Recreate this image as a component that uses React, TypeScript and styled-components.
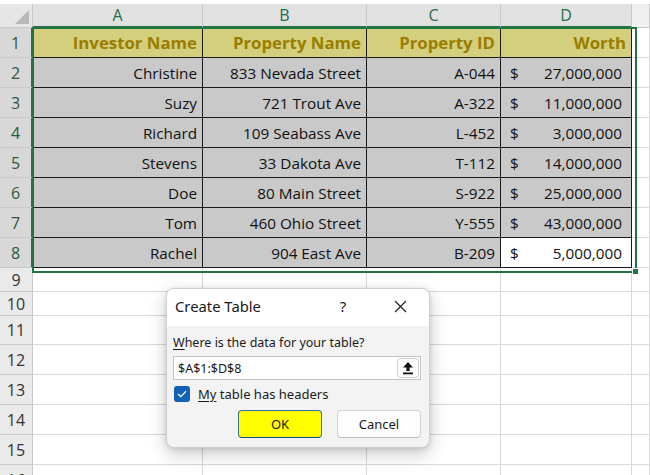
import React from "react";
import styled, { createGlobalStyle } from "styled-components";

const Global = createGlobalStyle`
  html, body { margin: 0; padding: 0; background: #ffffff; }
  body { width: 650px; height: 475px; overflow: hidden; }
`;

const GREEN = "#217346";

const Page = styled.div`
  position: relative;
  width: 650px;
  height: 475px;
  overflow: hidden;
  background: #ffffff;
  padding-top: 4px;
  box-sizing: border-box;
  font-family: "Open Sans", "Noto Sans", sans-serif;
`;

const Sheet = styled.div`
  position: relative;
  display: grid;
  grid-template-columns: 33px 170px 164px 134px 131px 1fr;
  grid-template-rows: 24px repeat(8, 30px) 24px 24px 29px repeat(6, 30px);
`;

const Corner = styled.div`
  position: relative;
  background: #e6e6e6;
  border-right: 1px solid #c8c8c8;
  border-bottom: 1px solid #c8c8c8;
  &::after {
    content: "";
    position: absolute;
    right: 3px;
    bottom: 3px;
    width: 0;
    height: 0;
    border-left: 14px solid transparent;
    border-bottom: 14px solid #b8b8b8;
  }
`;

const ColHead = styled.div<{ $sel?: boolean }>`
  display: flex;
  align-items: center;
  justify-content: center;
  font-size: 16px;
  background: ${(p) => (p.$sel ? "#e1e1e1" : "#f0f0f0")};
  color: ${(p) => (p.$sel ? "#1f6f47" : "#444")};
  border-right: 1px solid #c8c8c8;
  border-bottom: ${(p) => (p.$sel ? `2px solid ${GREEN}` : "1px solid #c8c8c8")};
`;

const RowHead = styled.div<{ $sel?: boolean }>`
  display: flex;
  align-items: center;
  justify-content: center;
  font-size: 16px;
  background: ${(p) => (p.$sel ? "#d8d8d8" : "#eaeaea")};
  color: ${(p) => (p.$sel ? "#2a5a40" : "#333")};
  border-right: ${(p) => (p.$sel ? `2px solid ${GREEN}` : "1px solid #c8c8c8")};
  border-bottom: 1px solid #c8c8c8;
`;

type Kind = "head" | "data" | "white" | "empty";

const Cell = styled.div<{ $kind: Kind }>`
  display: flex;
  align-items: center;
  justify-content: flex-end;
  padding: 0 5px;
  gap: 8px;
  font-size: ${(p) => (p.$kind === "head" ? "16.8px" : "15.3px")};
  white-space: nowrap;
  overflow: hidden;
  color: ${(p) => (p.$kind === "head" ? "#9a7d00" : "#111")};
  font-weight: ${(p) => (p.$kind === "head" ? 700 : 400)};
  background: ${(p) =>
    p.$kind === "head" ? "#d4cf7c" : p.$kind === "data" ? "#c9c9c9" : "#ffffff"};
  border-right: 1px solid ${(p) => (p.$kind === "empty" ? "#d9d9d9" : "#1a1a1a")};
  border-bottom: 1px solid ${(p) => (p.$kind === "empty" ? "#d9d9d9" : "#1a1a1a")};
`;

const Money = styled.span`
  flex: 1;
  display: flex;
  justify-content: space-between;
  padding-left: 4px;
  padding-right: 4px;
`;

const Selection = styled.div`
  position: absolute;
  left: 32px;
  top: 23px;
  width: 601px;
  height: 242px;
  border: 2px solid ${GREEN};
  pointer-events: none;
  &::after {
    content: "";
    position: absolute;
    right: -4px;
    bottom: -4px;
    width: 5px;
    height: 5px;
    background: ${GREEN};
    border: 1px solid #fff;
  }
`;

const Dialog = styled.div`
  position: absolute;
  left: 166px;
  top: 288px;
  width: 264px;
  height: 160px;
  box-sizing: border-box;
  border: 1px solid #cfcfcf;
  border-radius: 8px;
  overflow: hidden;
  background: #f3f3f3;
  box-shadow: 0 6px 18px rgba(0, 0, 0, 0.22), 0 1px 4px rgba(0, 0, 0, 0.12);
  display: flex;
  flex-direction: column;
  font-family: "Noto Sans", "Open Sans", sans-serif;
  color: #1a1a1a;
`;

const TitleBar = styled.div`
  height: 37px;
  box-sizing: border-box;
  padding-bottom: 3px;
  background: #ffffff;
  display: flex;
  align-items: center;
  padding-left: 8px;
  padding-right: 6px;
  font-size: 14.8px;
`;

const Title = styled.span`
  flex: 1;
`;

const TitleBtn = styled.span<{ $gap?: number }>`
  width: 46px;
  margin-right: ${(p) => p.$gap ?? 0}px;
  display: flex;
  align-items: center;
  justify-content: center;
  font-size: 15px;
`;

const Body = styled.div`
  flex: 1;
  display: flex;
  flex-direction: column;
  padding: 9px 8px 0 6px;
  font-size: 12.5px;
`;

const Label = styled.div`
  height: 16px;
  line-height: 16px;
  margin-bottom: 5px;
`;

const U = styled.span`
  text-decoration: underline;
  text-underline-offset: 2px;
`;

const InputBox = styled.div`
  height: 24px;
  box-sizing: border-box;
  border: 1px solid #c4c4c4;
  background: #ffffff;
  display: flex;
  align-items: center;
  padding-left: 4px;
  padding-right: 1px;
  font-size: 12.5px;
`;

const InputText = styled.span`
  flex: 1;
`;

const PickBtn = styled.span`
  width: 22px;
  height: 20px;
  box-sizing: border-box;
  border: 1px solid #d0d0d0;
  border-radius: 3px;
  background: #fbfbfb;
  display: flex;
  align-items: center;
  justify-content: center;
`;

const CheckRow = styled.div`
  display: flex;
  align-items: center;
  gap: 8px;
  margin-top: 6px;
  height: 16px;
  padding-left: 1px;
  font-size: 13px;
`;

const Box = styled.span`
  width: 16px;
  height: 16px;
  border-radius: 3px;
  background: #0f62b8;
  display: flex;
  align-items: center;
  justify-content: center;
`;

const Buttons = styled.div`
  display: flex;
  justify-content: flex-end;
  gap: 15px;
  margin-top: 8px;
`;

const Btn = styled.div<{ $primary?: boolean }>`
  width: 84px;
  height: 28px;
  box-sizing: border-box;
  border-radius: 4px;
  display: flex;
  align-items: center;
  justify-content: center;
  font-size: 13px;
  background: ${(p) => (p.$primary ? "#ffff00" : "#fdfdfd")};
  border: 1px solid ${(p) => (p.$primary ? "#3a6ea5" : "#d2d2d2")};
  border-bottom-color: ${(p) => (p.$primary ? "#1d4f86" : "#bcbcbc")};
`;

const header = ["Investor Name", "Property Name", "Property ID", "Worth"];
const rows: [string, string, string, string][] = [
  ["Christine", "833 Nevada Street", "A-044", "27,000,000"],
  ["Suzy", "721 Trout Ave", "A-322", "11,000,000"],
  ["Richard", "109 Seabass Ave", "L-452", "3,000,000"],
  ["Stevens", "33 Dakota Ave", "T-112", "14,000,000"],
  ["Doe", "80 Main Street", "S-922", "25,000,000"],
  ["Tom", "460 Ohio Street", "Y-555", "43,000,000"],
  ["Rachel", "904 East Ave", "B-209", "5,000,000"],
];

export default function App() {
  const cols = ["A", "B", "C", "D"];
  const emptyRows = [9, 10, 11, 12, 13, 14, 15, 16];
  return (
    <Page>
      <Global />
      <Sheet>
        <Corner />
        {cols.map((c) => (
          <ColHead key={c} $sel>
            {c}
          </ColHead>
        ))}
        <ColHead />

        <RowHead $sel>1</RowHead>
        {header.map((h) => (
          <Cell key={h} $kind="head">
            {h}
          </Cell>
        ))}
        <Cell $kind="empty" />

        {rows.map((r, i) => {
          const last = i === rows.length - 1;
          return (
            <React.Fragment key={r[0]}>
              <RowHead $sel>{i + 2}</RowHead>
              <Cell $kind="data">{r[0]}</Cell>
              <Cell $kind="data">{r[1]}</Cell>
              <Cell $kind="data">{r[2]}</Cell>
              <Cell $kind={last ? "white" : "data"}>
                <Money>
                  <span>$</span>
                  <span>{r[3]}</span>
                </Money>
              </Cell>
              <Cell $kind="empty" />
            </React.Fragment>
          );
        })}

        {emptyRows.map((n) => (
          <React.Fragment key={n}>
            <RowHead>{n}</RowHead>
            <Cell $kind="empty" />
            <Cell $kind="empty" />
            <Cell $kind="empty" />
            <Cell $kind="empty" />
            <Cell $kind="empty" />
          </React.Fragment>
        ))}
        <Selection />
      </Sheet>

      <Dialog>
        <TitleBar>
          <Title>Create Table</Title>
          <TitleBtn $gap={11}>?</TitleBtn>
          <TitleBtn>
            <svg width="13" height="13" viewBox="0 0 13 13">
              <path d="M1 1 L12 12 M12 1 L1 12" stroke="#222" strokeWidth="1.2" />
            </svg>
          </TitleBtn>
        </TitleBar>
        <Body>
          <Label>
            <U>W</U>here is the data for your table?
          </Label>
          <InputBox>
            <InputText>$A$1:$D$8</InputText>
            <PickBtn>
              <svg width="12" height="14" viewBox="0 0 12 14">
                <path d="M6 1 L11 6.5 L7.6 6.5 L7.6 10 L4.4 10 L4.4 6.5 L1 6.5 Z" fill="#111" />
                <rect x="1" y="11.5" width="10" height="1.8" fill="#111" />
              </svg>
            </PickBtn>
          </InputBox>
          <CheckRow>
            <Box>
              <svg width="10" height="8" viewBox="0 0 10 8">
                <path d="M1 4 L3.8 6.6 L9 1.2" stroke="#fff" strokeWidth="1.3" fill="none" />
              </svg>
            </Box>
            <span>
              <U>My</U> table has headers
            </span>
          </CheckRow>
          <Buttons>
            <Btn $primary>OK</Btn>
            <Btn>Cancel</Btn>
          </Buttons>
        </Body>
      </Dialog>
    </Page>
  );
}
